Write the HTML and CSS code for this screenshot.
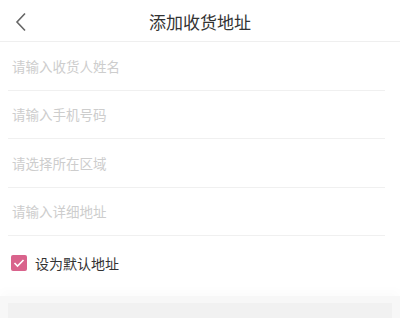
FILE: index.html
```html
<!DOCTYPE html>
<html lang="zh-CN">
<head>
    <meta charset="UTF-8">
    <meta name="viewport" content="width=device-width, initial-scale=1.0">
    <title>添加收货地址</title>
    <link rel="stylesheet" href="styles.css">
</head>
<body>
    <header class="header">
        <span class="back">
            <svg width="12" height="20" viewBox="0 0 12 20"><path d="M10 1.5 L2 10 L10 18.5" fill="none" stroke="#666" stroke-width="1.6"/></svg>
        </span>
        <h1 class="title">添加收货地址</h1>
    </header>

    <main class="form">
        <div class="field"><input type="text" placeholder="请输入收货人姓名"></div>
        <div class="field"><input type="text" placeholder="请输入手机号码"></div>
        <div class="field"><input type="text" placeholder="请选择所在区域"></div>
        <div class="field"><input type="text" placeholder="请输入详细地址"></div>
        <label class="default-row">
            <span class="check">
                <svg width="12" height="10" viewBox="0 0 12 10"><path d="M1.5 5 L4.5 8 L10.5 2" fill="none" stroke="#fff" stroke-width="1.6"/></svg>
            </span>
            设为默认地址
        </label>
    </main>

    <footer class="footer">
        <div class="footer-bar"></div>
    </footer>
</body>
</html>
```

FILE: styles.css
```css
* {
    margin: 0;
    padding: 0;
    box-sizing: border-box;
    font-family: "Noto Sans CJK SC", "Noto Sans", sans-serif;
}

body {
    background: #fff;
    width: 400px;
    height: 318px;
    overflow: hidden;
    display: flex;
    flex-direction: column;
}

.header {
    flex-shrink: 0;
    height: 42px;
    border-bottom: 1px solid #efefef;
    display: flex;
    align-items: center;
    justify-content: center;
    position: relative;
    padding-top: 1px;
}

.back {
    position: absolute;
    left: 15px;
    top: 12px;
}

.title {
    font-size: 17px;
    font-weight: normal;
    color: #333;
}

.form {
    flex-shrink: 0;
    padding: 0 15px 0 8px;
}

.field {
    height: 48.5px;
    border-bottom: 1px solid #f0f0f0;
    display: flex;
    align-items: center;
    padding-left: 4px;
}

.field input {
    border: none;
    outline: none;
    width: 100%;
    font-size: 13.5px;
    color: #333;
    background: transparent;
}

.field input::placeholder {
    color: #cdcdcd;
}

.default-row {
    height: 54px;
    display: flex;
    align-items: center;
    gap: 8px;
    padding-left: 3px;
    font-size: 14px;
    color: #333;
}

.check {
    width: 16px;
    height: 16px;
    background: #d9638c;
    border-radius: 2px;
    display: flex;
    align-items: center;
    justify-content: center;
}

.footer {
    flex: 1;
    background: #f7f7f7;
    margin-top: 6px;
    padding: 7px 8px 0;
    box-shadow: 0 -6px 10px rgba(0, 0, 0, 0.015);
}

.footer-bar {
    height: 20px;
    background: #f1f1f1;
}
```
